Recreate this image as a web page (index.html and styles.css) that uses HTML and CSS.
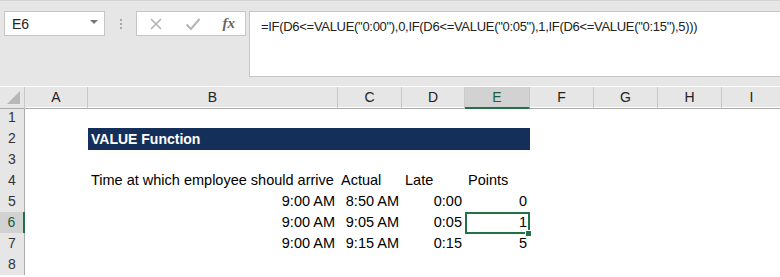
FILE: index.html
```html
<!DOCTYPE html>
<html lang="en">
<head>
<meta charset="UTF-8">
<title>VALUE Function</title>
<link rel="stylesheet" href="styles.css">
</head>
<body>
  <div class="toolbar">
    <div class="namebox">
      <span>E6</span>
      <span class="caret"></span>
    </div>
    <div class="grip"><i></i><i></i><i></i></div>
    <div class="fxbox">
      <svg class="ico" width="14" height="14" viewBox="0 0 14 14"><path d="M2 2 L12 12 M12 2 L2 12" stroke="#b4b4b4" stroke-width="1.6" fill="none"/></svg>
      <svg class="ico" width="16" height="14" viewBox="0 0 16 14"><path d="M1.5 7.5 L6 12 L14.5 2" stroke="#b4b4b4" stroke-width="2" fill="none"/></svg>
      <span class="fx">fx</span>
    </div>
    <div class="formula">=IF(D6&lt;=VALUE("0:00"),0,IF(D6&lt;=VALUE("0:05"),1,IF(D6&lt;=VALUE("0:15"),5)))</div>
  </div>

  <div class="sheet">
    <div class="row head">
      <div class="corner"><span class="tri"></span></div>
      <div class="ch">A</div><div class="ch">B</div><div class="ch">C</div><div class="ch">D</div>
      <div class="ch sel">E</div><div class="ch">F</div><div class="ch">G</div><div class="ch">H</div><div class="ch">I</div>
    </div>
    <div class="row"><div class="rh">1</div></div>
    <div class="row">
      <div class="rh">2</div><div class="c"></div>
      <div class="band">VALUE Function</div>
    </div>
    <div class="row"><div class="rh">3</div></div>
    <div class="row">
      <div class="rh">4</div><div class="c"></div>
      <div class="c">Time at which employee should arrive</div>
      <div class="c">Actual</div><div class="c">Late</div><div class="c">Points</div>
    </div>
    <div class="row">
      <div class="rh">5</div><div class="c"></div>
      <div class="c r">9:00 AM</div><div class="c r">8:50 AM</div><div class="c r">0:00</div><div class="c r">0</div>
    </div>
    <div class="row">
      <div class="rh sel">6</div><div class="c"></div>
      <div class="c r">9:00 AM</div><div class="c r">9:05 AM</div><div class="c r">0:05</div><div class="c r active">1</div>
    </div>
    <div class="row">
      <div class="rh">7</div><div class="c"></div>
      <div class="c r">9:00 AM</div><div class="c r">9:15 AM</div><div class="c r">0:15</div><div class="c r">5</div>
    </div>
    <div class="row"><div class="rh">8</div></div>
  </div>
</body>
</html>
```

FILE: styles.css
```css
:root{--bar:#e6e6e6;--line:#c6c6c6;--green:#217346;--navy:#14305a;}
body{margin:0;background:#fff;font-family:"Liberation Sans",Arial,sans-serif;color:#000;overflow:hidden;}

/* formula bar */
.toolbar{height:86px;background:var(--bar);border-top:1px solid #d4d4d4;display:flex;align-items:flex-start;padding:10px 0 0 4px;box-sizing:border-box;}
.namebox{width:101px;height:25px;box-sizing:border-box;background:#fff;border:1px solid var(--line);display:flex;align-items:center;justify-content:space-between;padding:0 6px 0 7px;font-size:14px;color:#222;}
.caret{width:0;height:0;border-left:4px solid transparent;border-right:4px solid transparent;border-top:4px solid #777;margin-top:-3px;}
.grip{width:31px;height:25px;display:flex;flex-direction:column;align-items:center;justify-content:center;gap:2px;}
.grip i{width:2px;height:2px;background:#a6a6a6;}
.fxbox{width:110px;height:25px;box-sizing:border-box;background:#fff;border:1px solid var(--line);display:flex;align-items:center;justify-content:space-between;padding:0 10px 0 12px;}
.fx{font-family:"Liberation Serif",serif;font-style:italic;font-size:15px;color:#666;font-weight:bold;}
.formula{margin-left:3px;flex:1;height:66px;box-sizing:border-box;background:#fff;border:1px solid var(--line);border-right:none;padding:7px 0 0 11px;font-size:13px;color:#222;white-space:nowrap;letter-spacing:-0.3px;}

/* grid */
.sheet{border-top:1px solid #fff;}
.row{display:grid;grid-template-columns:25px 63px 250px 64px 63px 65px 64px 64px 64px 60px;height:21px;font-size:14.5px;}
.row.head{height:20px;background:var(--bar);font-size:14px;}
.corner{position:relative;border-right:1px solid #c8c8c8;border-bottom:1px solid #ababab;}
.tri{position:absolute;right:4px;bottom:4px;width:0;height:0;border-left:13px solid transparent;border-bottom:13px solid #b8b8b8;}
.ch{border-right:1px solid #c8c8c8;border-bottom:1px solid #ababab;text-align:center;line-height:20px;color:#222;}
.ch.sel{background:#d2d2d2;border-bottom:2px solid var(--green);color:#1d5f3a;}
.rh{grid-column:1;background:var(--bar);border-right:1px solid #ababab;border-bottom:1px solid #cfcfcf;text-align:center;line-height:21px;color:#333;font-size:14px;}
.rh.sel{background:#d2d2d2;border-right:2px solid var(--green);color:#1d5f3a;}
.c{padding:0 3px;line-height:21px;white-space:nowrap;}
.c.r{text-align:right;}
.band{grid-column:3 / 7;background:var(--navy);color:#fff;font-weight:bold;padding:0 3px;line-height:22px;font-size:14px;}
.active{position:relative;box-shadow:inset 0 0 0 2px var(--green);}
.active::after{content:"";position:absolute;right:-2px;bottom:-3px;width:5px;height:5px;background:var(--green);border:1px solid #fff;}
```
